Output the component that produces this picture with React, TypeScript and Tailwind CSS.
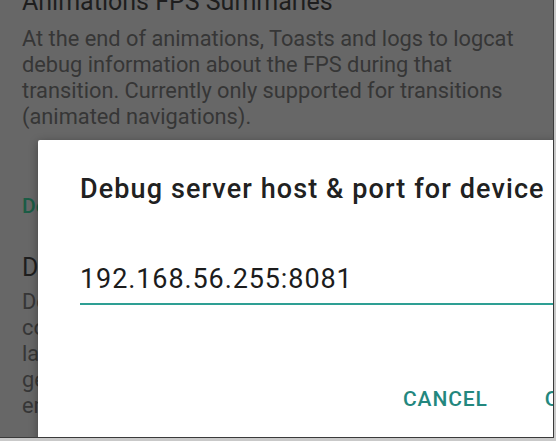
const font = { fontFamily: 'Roboto, "Noto Sans", sans-serif' }

const BackgroundList = () => (
  <div className="pl-[22px] -mt-[12px]" style={font}>
    <div className="text-[25px] leading-[28px] text-[#1e1e1e] whitespace-nowrap">Animations FPS Summaries</div>
    <div className="mt-[10px] text-[21.8px] leading-[26px] text-[#363636] whitespace-nowrap">
      <div>At the end of animations, Toasts and logs to logcat</div>
      <div>debug information about the FPS during that</div>
      <div>transition. Currently only supported for transitions</div>
      <div>(animated navigations).</div>
    </div>

    <div className="mt-[63px] text-[21px] leading-[26px] font-medium text-[#1b5c45] whitespace-nowrap">Debugging</div>

    <div className="mt-[35px] text-[25px] leading-[28px] text-[#1e1e1e] whitespace-nowrap">Debug server host &amp; port for device</div>
    <div className="mt-[7px] text-[21.8px] leading-[26px] text-[#363636] whitespace-nowrap">
      <div>Debug server host and port for device to</div>
      <div>connect to. Leave empty to use the</div>
      <div>last value, or the default address</div>
      <div>generated for the localhost of the</div>
      <div>emulator.</div>
    </div>
  </div>
)

const HostDialog = () => (
  <div
    className="absolute left-[38px] top-[140px] w-[540px] h-[320px] bg-white rounded-[2px] shadow-[0_2px_8px_rgba(0,0,0,0.35)] pl-[42px] pt-[33px] flex flex-col"
    style={font}
  >
    <div className="text-[27px] leading-8 font-medium tracking-[1.1px] text-[#212121] whitespace-nowrap">
      Debug server host &amp; port for device
    </div>

    <div className="mt-[58px] text-[27px] leading-8 tracking-[0.9px] text-[#1c1c1c] whitespace-nowrap">192.168.56.255:8081</div>
    <div className="mt-[8px] h-[2px] bg-[#2e9f94]" />

    <div className="mt-[82px] ml-[323px] flex items-center gap-[57px] text-[21px] leading-6 font-medium tracking-[0.9px] text-[#23877e]">
      <span>CANCEL</span>
      <span>OK</span>
    </div>
  </div>
)

export default function App() {
  return (
    <div className="w-[556px] h-[441px] bg-[#c9c9c9] overflow-hidden">
      <div className="w-[554px] h-[438px] border-r border-b border-[#3a3a3a]">
        <div className="relative w-[553px] h-[437px] bg-[#676767] overflow-hidden">
          <BackgroundList />
          <HostDialog />
        </div>
      </div>
    </div>
  )
}
